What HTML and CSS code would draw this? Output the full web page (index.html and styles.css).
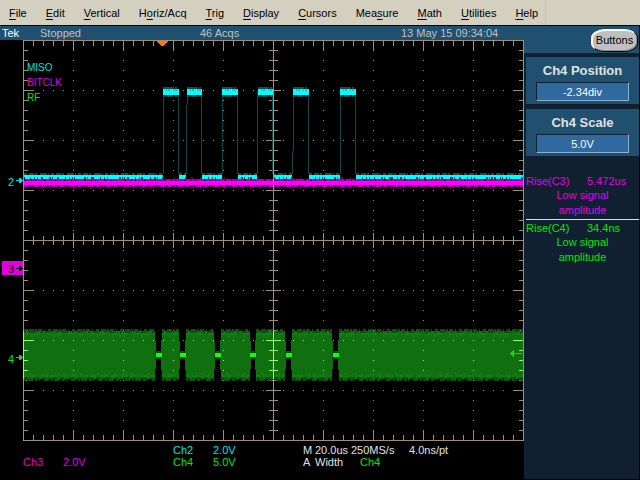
FILE: index.html
```html
<!DOCTYPE html>
<html lang="en">
<head>
    <meta charset="UTF-8">
    <meta name="viewport" content="width=device-width, initial-scale=1.0">
    <title>Tek Oscilloscope</title>
    <link rel="stylesheet" href="styles.css">
</head>
<body>
    <nav class="menu">
        <button type="button"><u>F</u>ile</button>
        <button type="button"><u>E</u>dit</button>
        <button type="button"><u>V</u>ertical</button>
        <button type="button">H<u>o</u>riz/Acq</button>
        <button type="button"><u>T</u>rig</button>
        <button type="button"><u>D</u>isplay</button>
        <button type="button"><u>C</u>ursors</button>
        <button type="button">Mea<u>s</u>ure</button>
        <button type="button"><u>M</u>ath</button>
        <button type="button"><u>U</u>tilities</button>
        <button type="button"><u>H</u>elp</button>
    </nav>
    <div class="workspace">
        <main class="main">
            <div class="status">
                <span class="brand">Tek</span>
                <span>Stopped</span>
                <span>46 Acqs</span>
                <time>13 May 15 09:34:04</time>
            </div>
            <svg class="scope" viewBox="0 0 524 401" shape-rendering="crispEdges">
                <defs>
                    <g id="graticule" fill="none" stroke="currentColor">
                        <path d="M0 .5H501M0 200.5H501M0 400.5H501M.5 0V401M250.5 0V401M500.5 0V401"/>
                        <!-- minor ticks -->
                        <path stroke-width="5" stroke-dasharray="1 9" d="M0 3.5H501M0 397.5H501M2.5 0V401M498.5 0V401"/>
                        <path stroke-width="9" stroke-dasharray="1 9" d="M0 200.5H501M250.5 0V401"/>
                        <!-- major ticks -->
                        <path stroke-width="11" stroke-dasharray="1 49" d="M0 5.5H501M0 395.5H501M5.5 0V401M495.5 0V401"/>
                        <path stroke-width="15" stroke-dasharray="1 49" d="M0 200.5H501M250.5 0V401"/>
                        <!-- dots -->
                        <path stroke-dasharray="1 9" d="M0 50.5H501M0 100.5H501M0 150.5H501M0 250.5H501M0 300.5H501M0 350.5H501M50.5 0V401M100.5 0V401M150.5 0V401M200.5 0V401M300.5 0V401M350.5 0V401M400.5 0V401M450.5 0V401"/>
                    </g>
                    <clipPath id="band"><path d="M0 291H132V339H0zM139 291H156V339H139zM163 291H191V339H163zM198 291H227V339H198zM233 291H262V339H233zM269 291H309V339H269zM316 291H500V339H316z"/></clipPath>
                    <path id="base" d="M1 0H140M156 0H163M179 0H199M215 0H234M250 0H269M286 0H317M333 0H500"/>
                    <path id="tops" d="M140 0H156M164 0H179M199 0H215M235 0H250M270 0H286M317 0H333"/>
                    <path id="bursts" d="M1 0H132M139 0H156M163 0H191M198 0H227M233 0H262M269 0H309M316 0H500"/>
                </defs>
                <g transform="translate(23 0)">
                    <use href="#graticule" class="grid"/>

                    <!-- Ch2 -->
                    <g fill="none" stroke-width="2">
                        <path class="edge" d="M140.500 52V134M155.500 52V134M164.500 52V65M163.500 65V134M178.500 52V134M199.500 52V134M214.500 52V134M234.500 52V134M249.500 52V134M270.500 52V111M269.500 111V134M285.500 52V134M317.500 52V134M332.500 52V134"/>
                        <g class="ch2-dim">
                            <use href="#base" y="134" stroke-dasharray="3 2 5 1 2 3 7 1 1 2"/>
                            <use href="#base" y="138"/>
                            <use href="#tops" y="48" stroke-dasharray="11 1 2 3"/>
                            <use href="#tops" y="56" stroke-dasharray="3 1 6 2 2 1"/>
                        </g>
                        <g class="ch2-mid">
                            <use href="#tops" y="50"/>
                        </g>
                        <g class="ch2">
                            <use href="#base" y="136"/>
                            <use href="#base" y="138" stroke-dasharray="6 1 3 1 2 1 11 2 1 1 4 2"/>
                            <use href="#tops" y="52"/>
                            <use href="#tops" y="54"/>
                            <use href="#tops" y="50" stroke-dasharray="3 1 1 2"/>
                        </g>
                    </g>

                    <!-- Ch3 -->
                    <g fill="none" stroke-width="2">
                        <path class="ch3-mid" d="M1 140H500"/>
                        <path class="ch3-low" stroke-dasharray="2 5 1 3 1 8" d="M1 140H500"/>
                        <path class="ch3" stroke-width="4" d="M1 143H500"/>
                        <path class="ch3-low" d="M1 146H500"/>
                        <path class="ch3-mid" stroke-dasharray="3 4 1 2 5 3" d="M1 146H500"/>
                        <path class="ch3-low" stroke-dasharray="1 16 2 7 1 23" d="M1 148H500M1 138H500"/>
                    </g>

                    <!-- Ch4 -->
                    <g fill="none" stroke-width="2">
                        <path class="ch4-body" stroke="none" d="M1 291H132L133 310V320L132 339H1zM139 291H156L157 310V320L156 339H139L138 320V310zM163 291H191L192 310V320L191 339H163L162 320V310zM198 291H227L228 310V320L227 339H198L197 320V310zM233 291H262L263 310V320L262 339H233L232 320V310zM269 291H309L310 310V320L309 339H269L268 320V310zM316 291H500V339H316L315 320V310z"/>
                        <g class="ch4-dim">
                            <use href="#bursts" y="290" stroke-dasharray="3 2 5 1 2 1 4 2 1 3"/>
                            <use href="#bursts" y="340" stroke-dasharray="2 1 6 2 3 1 1 4 5 2"/>
                            <use href="#bursts" y="292" stroke-dasharray="2 3 5 1 1 4"/>
                            <use href="#bursts" y="338" stroke-dasharray="4 2 1 2 6 3"/>
                            <path stroke-width="8" d="M132 315H139M156 315H163M191 315H198M227 315H233M262 315H269M309 315H316"/>
                        </g>
                        <g class="ch4-mid">
                            <use href="#bursts" y="294" stroke-dasharray="5 1 2 1 7 3 1 2"/>
                            <use href="#bursts" y="336" stroke-dasharray="4 2 6 1 1 3 2 1"/>
                            <use href="#bursts" y="296" stroke-dasharray="1 6 2 3 1 9"/>
                            <use href="#bursts" y="334" stroke-dasharray="1 4 2 7 1 2"/>
                        </g>
                        <path class="ch4-line" stroke-width="4" d="M133 315H139M157 315H163M192 315H198M227 315H233M263 315H269M310 315H316"/>
                    </g>
                    <use href="#graticule" class="grid-lit" clip-path="url(#band)"/>
                    <path class="grid" fill="none" stroke="currentColor" d="M250.500 0V291M500.500 0V401"/>
                    <path class="level" d="M487 313H488V312H489V311H490V310H491V313H499V314H491V317H490V316H489V315H488V314H487z"/>
                </g>

                <!-- trigger position and channel markers -->
                <path class="trigger" d="M157 1H168V2L163 6H162L157 2z"/>
                <g class="c2"><text x="8" y="146">2</text><path d="M16 140H19V138H21V139H22V140H23V141H22V142H21V143H19V141H16z"/></g>
                <rect class="c3" x="2" y="221" width="21" height="14"/>
                <g><text x="8" y="233">3</text><path d="M16 228H19V226H21V227H22V228H23V229H22V230H21V231H19V229H16z"/></g>
                <g class="c4"><text x="8" y="323">4</text><path d="M16 317H19V315H21V316H22V317H23V318H22V319H21V320H19V318H16z"/></g>
                <g class="trace-names">
                    <text class="c2" x="27" y="31">MISO</text>
                    <text class="c3" x="27" y="46">BITCLK</text>
                    <text class="c4" x="27" y="61">RF</text>
                </g>
            </svg>
            <div class="readouts">
                <div class="scales c3"><span></span><span></span><span>Ch3</span><span>2.0V</span></div>
                <div class="scales"><span class="c2">Ch2</span><span class="c2">2.0V</span><span class="c4">Ch4</span><span class="c4">5.0V</span></div>
                <div class="timebase">
                    <span>M</span><span>20.0us</span><span>250MS/s</span><span>4.0ns/pt</span>
                    <span>A</span><span>Width</span><span class="c4 source">Ch4</span>
                </div>
            </div>
        </main>
        <aside class="side">
            <div class="side-top"><button type="button" class="buttons-btn">Buttons</button></div>
            <div class="control">
                <label for="position">Ch4 Position</label>
                <input type="text" id="position" value="-2.34div">
            </div>
            <div class="control">
                <label for="scale">Ch4 Scale</label>
                <input type="text" id="scale" value="5.0V">
            </div>
            <div class="measure c3">
                <div class="measure-row"><span>Rise(C3)</span><span>5.472us</span></div>
                <p>Low signal<br>amplitude</p>
            </div>
            <div class="measure c4">
                <div class="measure-row"><span>Rise(C4)</span><span>34.4ns</span></div>
                <p>Low signal<br>amplitude</p>
            </div>
        </aside>
    </div>
</body>
</html>
```

FILE: styles.css
```css
* {
    box-sizing: border-box;
}
body {
    margin: 0;
    min-height: 100vh;
    display: flex;
    flex-direction: column;
    background: #000;
    color: #e0e0e0;
    font-family: "Liberation Sans", Arial, sans-serif;
    font-size: 11px;
    line-height: 12px;
}
button, input {
    font: inherit;
}

/* Menu */
.menu {
    display: flex;
    gap: 19px;
    height: 26px;
    padding-left: 9px;
    background: #d4d0c0;
    border-bottom: 1px solid #000;
}
.menu button {
    padding: 0;
    border: 0;
    background: none;
    color: #000;
}
.menu u {
    text-underline-offset: 2px;
}
.menu button:last-child {
    padding-right: 7px;
    border-right: 1px solid #c0c0c0;
}

.workspace {
    flex: 1;
    display: flex;
    border-right: 1px solid #000;
    border-bottom: 1px solid #000;
}
.main {
    flex: 1;
}
.status {
    display: grid;
    grid-template-columns: 38px 160px 201px 1fr;
    height: 14px;
    padding-left: 2px;
    line-height: 14px;
    background: #205070;
    color: #c0c0c0;
}
.brand {
    color: #fff;
}

/* Channel colours */
.c2 {
    color: #00e0e0;
    fill: #00e0e0;
}
.c3 {
    color: #e000e0;
    fill: #e000e0;
}
.c4 {
    color: #00e800;
    fill: #00e800;
}

/* Waveforms */
.scope {
    display: block;
    width: 100%;
    font-size: 11px;
}
.trace-names {
    font-size: 10px;
}
.grid {
    color: #a09070;
}
.grid-lit {
    color: #90ff60;
}
.edge {
    stroke: #104848;
    stroke-width: 1px;
}
.ch2 {
    stroke: #00ffff;
}
.ch2-mid {
    stroke: #10c0c0;
}
.ch2-dim {
    stroke: #105050;
}
.ch3 {
    stroke: #ff00ff;
}
.ch3-mid {
    stroke: #b000b0;
}
.ch3-low {
    stroke: #501050;
}
.ch4-body {
    fill: #107010;
}
.ch4-dim {
    stroke: #105010;
}
.ch4-mid {
    stroke: #108010;
}
.ch4-line {
    stroke: #10ff10;
}
.level {
    fill: #00e800;
}
.trigger {
    fill: #ff7020;
}

/* Readouts under the graticule */
.readouts {
    display: flex;
    padding: 3px 0 0 23px;
}
.scales {
    display: grid;
    grid-template-columns: 40px 1fr;
    grid-template-rows: 12px 12px;
    width: 150px;
}
.scales + .scales {
    width: 130px;
}
.timebase {
    display: grid;
    grid-template-columns: 12px 36px 58px 1fr;
    grid-template-rows: 12px 12px;
}
.source {
    padding-left: 9px;
}

/* Side panel */
.side {
    width: 115px;
    background: #102030;
}
.side-top {
    display: flex;
    justify-content: flex-end;
    height: 27px;
    padding: 3px 1px 1px 0;
    background: #205070;
}
.buttons-btn {
    width: 47px;
    padding: 0 0 2px;
    border: 1px solid;
    border-color: #fff #000 #000 #fff;
    border-radius: 14px / 9px;
    background: #c0c0c0;
    box-shadow: inset 1px 1px #fff, inset -1px -1px #909090;
    color: #000;
}
.control {
    display: flex;
    flex-direction: column;
    gap: 4px;
    height: 47px;
    margin: 4px 0 5px 2px;
    padding: 6px 10px 0;
    background: #205070;
    text-align: center;
}
.control label {
    font-size: 13px;
    font-weight: bold;
    line-height: 15px;
}
.control input {
    width: 100%;
    height: 19px;
    padding: 0;
    border: 1px solid;
    border-color: #102030 #90b0d0 #90b0d0 #102030;
    border-radius: 0;
    background: #3068a0;
    color: #fff;
    text-align: center;
}
.measure {
    margin-left: 2px;
    padding-top: 2px;
}
.control + .measure {
    padding: 14px 0 1px;
    border-bottom: 1px solid #e0e0e0;
}
.measure-row {
    display: grid;
    grid-template-columns: 61px 1fr;
    line-height: 13px;
}
.measure p {
    margin: 0;
    text-align: center;
    line-height: 15px;
}
```
